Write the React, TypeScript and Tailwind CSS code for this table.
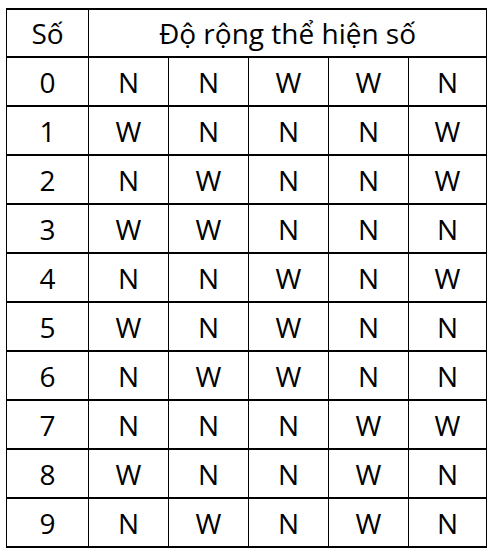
const rows: string[][] = [
  ["0", "N", "N", "W", "W", "N"],
  ["1", "W", "N", "N", "N", "W"],
  ["2", "N", "W", "N", "N", "W"],
  ["3", "W", "W", "N", "N", "N"],
  ["4", "N", "N", "W", "N", "W"],
  ["5", "W", "N", "W", "N", "N"],
  ["6", "N", "W", "W", "N", "N"],
  ["7", "N", "N", "N", "W", "W"],
  ["8", "W", "N", "N", "W", "N"],
  ["9", "N", "W", "N", "W", "N"],
];

const widths = ["w-[82px]", "w-[80px]", "w-[80px]", "w-[80px]", "w-[80px]", "w-[78px]"];

export default function App() {
  return (
    <div className="w-[494px] h-[553px] bg-white pl-[6px] pt-[8px] font-['Open_Sans',sans-serif] text-[28px] leading-none text-black">
      <table className="border-collapse table-fixed">
        <tbody>
          <tr className="h-[48px]">
            <td className="w-[82px] border-x border-y-2 border-black text-center p-0">Số</td>
            <td colSpan={5} className="border-x border-y-2 border-black text-center p-0">
              Độ rộng thể hiện số
            </td>
          </tr>
          {rows.map((r) => (
            <tr key={r[0]} className="h-[49px]">
              {r.map((c, i) => (
                <td key={i} className={`${widths[i]} border-x border-y-2 border-black text-center p-0`}>
                  {c}
                </td>
              ))}
            </tr>
          ))}
        </tbody>
      </table>
    </div>
  );
}
